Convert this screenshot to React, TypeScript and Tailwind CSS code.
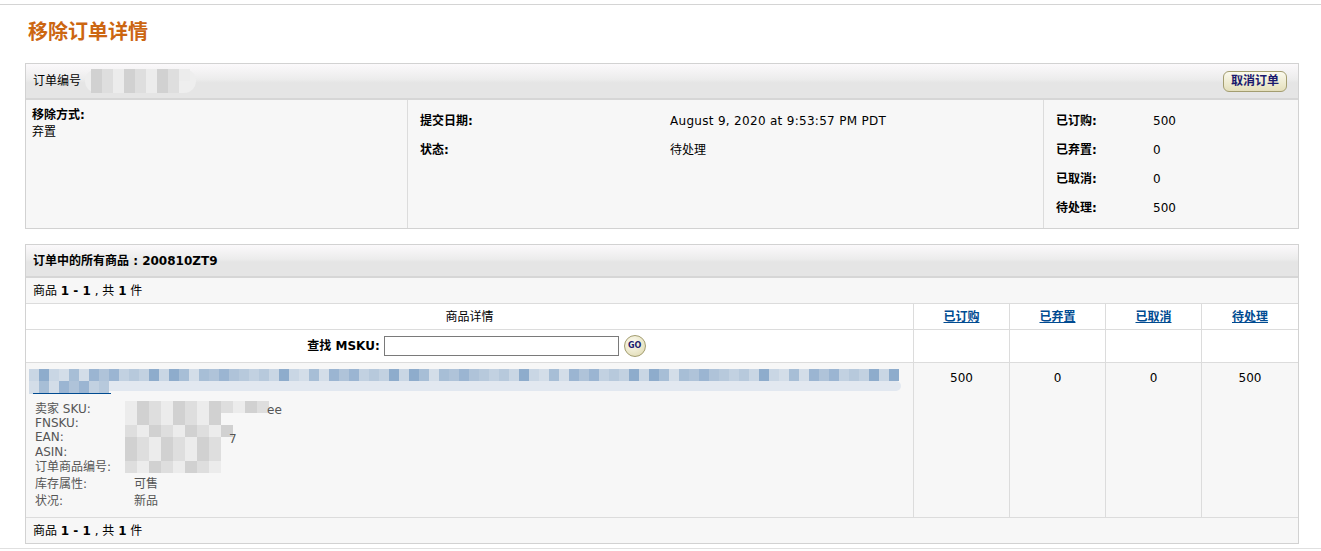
import React from "react";

const FONT = '"DejaVu Sans", "Noto Sans CJK SC", sans-serif';

const blueShades = ["#c9d6e4", "#a7bed6", "#9bb5d2", "#b7c9dc", "#8eaccc", "#d3dde8", "#afc3d9", "#c2d1e1"];
const grayShades = ["#dedede", "#d6d6d6", "#e6e6e6", "#d1d1d1", "#e2e2e2", "#ececec", "#dadada"];

const pick = (arr: string[], i: number) => arr[(i * 7 + (i % 3) * 5) % arr.length];

const Mosaic = ({ cols, cell, h, palette, seed = 0 }: { cols: number; cell: number; h: number; palette: string[]; seed?: number }) => (
  <div className="flex">
    {Array.from({ length: cols }).map((_, i) => (
      <div key={i} style={{ width: cell, height: h, background: pick(palette, i + seed) }} />
    ))}
  </div>
);

const BoxHeader = ({ children, tall }: { children: React.ReactNode; tall?: boolean }) => (
  <div
    className={`flex items-center justify-between px-[7px] border-b-2 border-[#d6d6d6] bg-[linear-gradient(#fbf9fb_0%,#ececec_45%,#e5e5e5_55%,#e5e5e5_100%)] ${
      tall ? "h-[36px]" : "h-[33px]"
    }`}
  >
    {children}
  </div>
);

const StatRow = ({ label, value }: { label: string; value: string }) => (
  <div className="flex h-[29px] items-center">
    <div className="w-[97px] font-bold">{label}</div>
    <div>{value}</div>
  </div>
);

const Pager = () => (
  <div className="h-[25px] flex items-center px-[7px]">
    商品&nbsp;<b>1 - 1</b>&nbsp;,&nbsp;共&nbsp;<b>1</b>&nbsp;件
  </div>
);

const DetailLine = ({ label, value, h = 14 }: { label: string; value?: string; h?: number }) => (
  <div className="flex items-center text-[#555]" style={{ height: h }}>
    <div className="w-[99px]">{label}</div>
    {value && <div>{value}</div>}
  </div>
);

export default function App() {
  const cols = ["已订购", "已弃置", "已取消", "待处理"];
  const grid = "grid grid-cols-[888px_96px_96px_96px_1fr]";

  return (
    <div className="w-[1321px] h-[551px] bg-white text-[12px] text-black overflow-hidden" style={{ fontFamily: FONT }}>
      <div className="h-[5px] border-b border-[#d4d4d4]" />
      <h1 className="ml-[28px] mt-[14px] text-[20px] leading-[26px] font-bold text-[#cc6611]">移除订单详情</h1>

      {/* order summary */}
      <div className="mt-[18px] mx-[25px] w-[1274px] border border-[#d2d2d2]">
        <BoxHeader tall>
          <div className="flex items-center">
            <span>订单编号</span>
            <div className="ml-[4px] flex items-center rounded-full bg-[#eeeeee] h-[24px] px-[6px]">
              <div className="flex flex-col">
                <Mosaic cols={9} cell={11} h={12} palette={grayShades} seed={2} />
                <Mosaic cols={8} cell={11} h={12} palette={grayShades} seed={5} />
              </div>
            </div>
          </div>
          <button className="h-[21px] px-[7px] rounded-[6px] border border-[#a39d70] bg-[linear-gradient(#fbfaee,#e4dfbb)] text-[12px] font-bold text-[#1a1a6e] leading-none mr-[4px]">
            取消订单
          </button>
        </BoxHeader>
        <div className="flex h-[128px] bg-[#f7f7f7]">
          <div className="w-[382px] border-r border-[#dcdcdc] px-[6px] pt-[7px] leading-[17px]">
            <div className="font-bold">移除方式:</div>
            <div>弃置</div>
          </div>
          <div className="w-[636px] border-r border-[#dcdcdc] pl-[12px] pt-[6px]">
            <div className="flex h-[29px] items-center">
              <div className="w-[250px] font-bold">提交日期:</div>
              <div className="tracking-[0.3px]">August 9, 2020 at 9:53:57 PM PDT</div>
            </div>
            <div className="flex h-[29px] items-center">
              <div className="w-[250px] font-bold">状态:</div>
              <div>待处理</div>
            </div>
          </div>
          <div className="flex-1 pl-[12px] pt-[6px]">
            <StatRow label="已订购:" value="500" />
            <StatRow label="已弃置:" value="0" />
            <StatRow label="已取消:" value="0" />
            <StatRow label="待处理:" value="500" />
          </div>
        </div>
      </div>

      {/* items */}
      <div className="mt-[15px] mx-[25px] w-[1274px] border border-[#d2d2d2]">
        <BoxHeader>
          <span className="font-bold">订单中的所有商品 :&nbsp;200810ZT9</span>
        </BoxHeader>
        <div className="bg-[#f7f7f7] border-b border-[#dcdcdc]">
          <Pager />
        </div>
        <div className={`${grid} bg-white border-b border-[#dcdcdc] h-[26px]`}>
          <div className="flex items-center justify-center border-r border-[#dcdcdc]">商品详情</div>
          {cols.map((c, i) => (
            <div key={c} className={`flex items-center justify-center ${i < 3 ? "border-r border-[#dcdcdc]" : ""}`}>
              <a className="font-bold text-[#004b91] underline cursor-pointer">{c}</a>
            </div>
          ))}
        </div>
        <div className={`${grid} bg-white border-b border-[#dcdcdc] h-[33px]`}>
          <div className="flex items-center justify-center border-r border-[#dcdcdc] pl-[14px]">
            <span className="font-bold mr-[4px]">查找 MSKU:</span>
            <input className="w-[235px] h-[20px] border border-[#7a7a7a] bg-white" />
            <button className="ml-[5px] w-[22px] h-[22px] rounded-full border border-[#a39d70] bg-[radial-gradient(circle_at_40%_35%,#fdfcf2,#ddd7ac)] text-[8px] font-bold text-[#1a1a6e] leading-none">
              GO
            </button>
          </div>
          {cols.map((c, i) => (
            <div key={c} className={i < 3 ? "border-r border-[#dcdcdc]" : ""} />
          ))}
        </div>
        <div className={`${grid} bg-[#f7f7f7] border-b border-[#dcdcdc] h-[155px]`}>
          <div className="border-r border-[#dcdcdc] pl-[3px] pt-[6px]">
            <div className="relative h-[27px]">
              <div className="flex flex-col">
                <Mosaic cols={87} cell={10} h={12} palette={blueShades} />
                <div className="h-[10px] w-[872px] bg-[#e2e8f0] rounded-r-full" />
              </div>
              <div className="absolute left-0 top-[12px]">
                <Mosaic cols={8} cell={10} h={13} palette={blueShades} seed={3} />
              </div>
              <div className="absolute left-[4px] top-[24px] w-[78px] border-b border-[#004b91]" />
            </div>
            <div className="relative pl-[6px] pt-[5px]">
              <DetailLine label="卖家 SKU:" h={15} />
              <DetailLine label="FNSKU:" />
              <DetailLine label="EAN:" />
              <DetailLine label="ASIN:" h={15} />
              <DetailLine label="订单商品编号:" h={16} />
              <DetailLine label="库存属性:" value="可售" h={17} />
              <DetailLine label="状况:" value="新品" h={17} />
              <div className="absolute left-[96px] top-[5px] flex flex-col">
                <Mosaic cols={12} cell={12} h={12} palette={grayShades} seed={1} />
                <Mosaic cols={8} cell={12} h={12} palette={grayShades} seed={4} />
                <Mosaic cols={9} cell={12} h={12} palette={grayShades} seed={6} />
                <Mosaic cols={8} cell={12} h={12} palette={grayShades} seed={2} />
                <Mosaic cols={8} cell={12} h={12} palette={grayShades} seed={5} />
                <Mosaic cols={8} cell={12} h={12} palette={grayShades} seed={3} />
              </div>
              <span className="absolute left-[238px] top-[5px] text-[#555]">ee</span>
              <span className="absolute left-[200px] top-[34px] text-[#555]">7</span>
            </div>
          </div>
          {["500", "0", "0", "500"].map((v, i) => (
            <div key={i} className={`text-center pt-[6px] ${i < 3 ? "border-r border-[#dcdcdc]" : ""}`}>
              {v}
            </div>
          ))}
        </div>
        <div className="bg-[#f7f7f7]">
          <Pager />
        </div>
      </div>
      <div className="mt-[4px] border-t border-[#e0e0e0]" />
    </div>
  );
}
